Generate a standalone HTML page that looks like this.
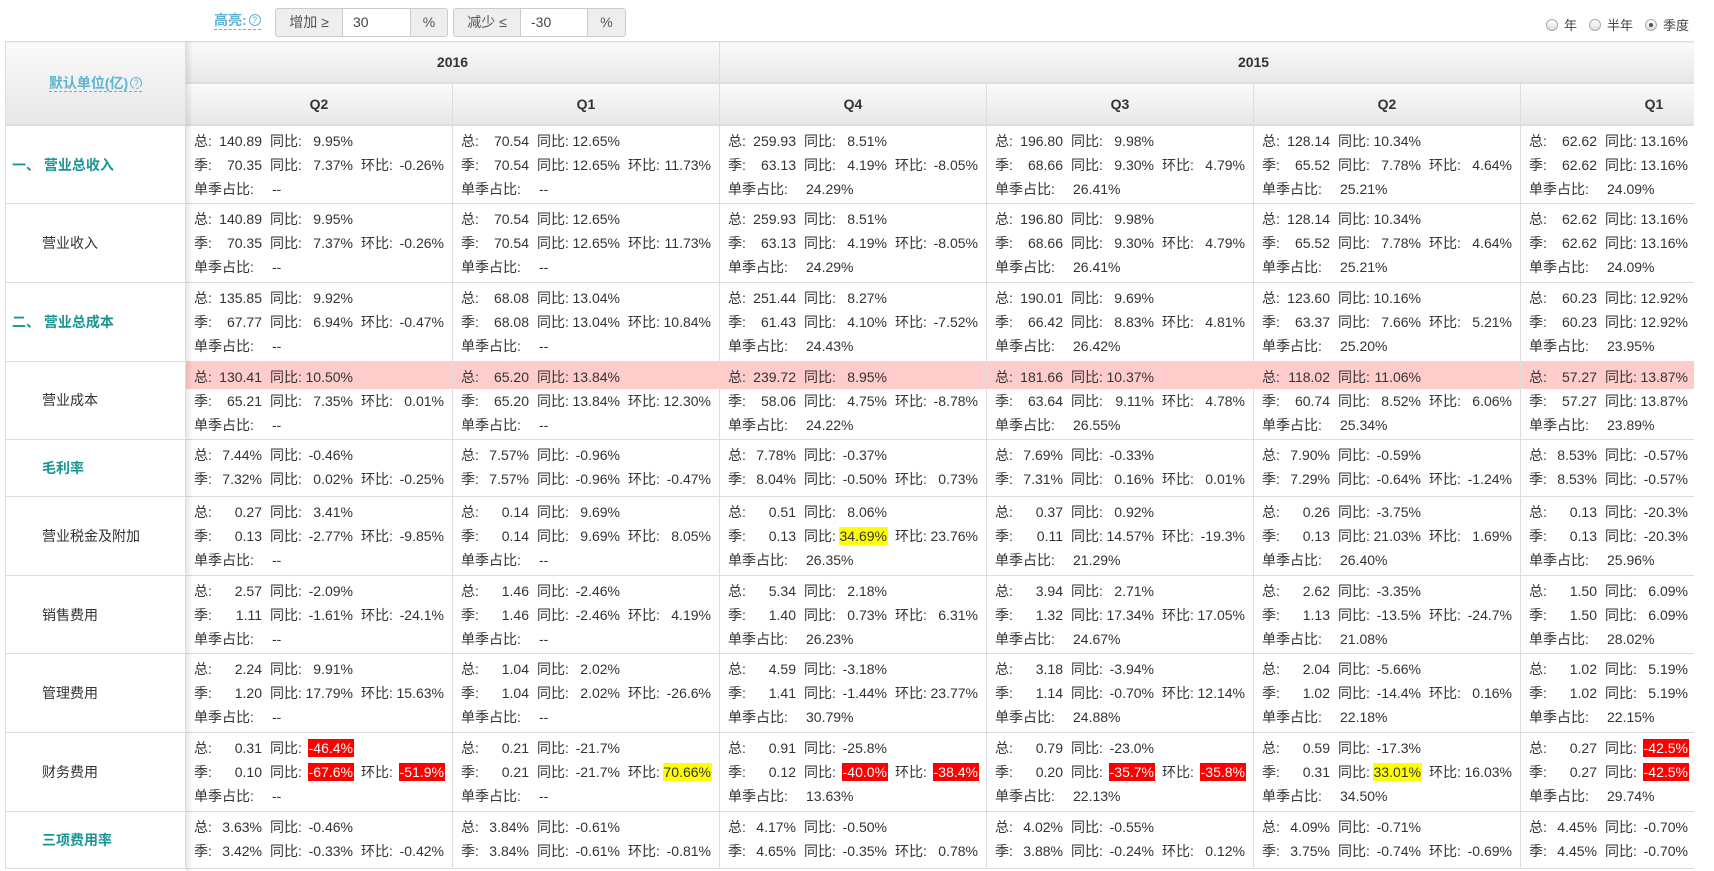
<!DOCTYPE html>
<html><head><meta charset="utf-8"><style>
*{box-sizing:content-box}
body{margin:0;width:1714px;height:867px;overflow:hidden;background:#fff;font-family:"Liberation Sans","Noto Sans CJK SC",sans-serif;font-size:14px;color:#333;position:relative}
.tb{position:absolute;top:8px;height:27px;border:1px solid #ccc;border-radius:3px;display:flex;background:#eee;font-size:14px;color:#555}
.tb span{display:block;line-height:27px;text-align:center}
.tb .in{background:#fff;border-left:1px solid #ccc;border-right:1px solid #ccc;text-align:left;padding-left:10px;box-sizing:border-box;color:#444}
.hl{position:absolute;left:214px;top:11px;color:#5bb5d5;font-weight:bold;font-size:14px;border-bottom:1px dashed #5bb5d5;line-height:18px}
.q{display:inline-block;width:10px;height:10px;border:1px solid #5bb5d5;border-radius:50%;font-size:9px;line-height:10px;text-align:center;font-weight:normal;vertical-align:2px;margin-left:2px}
.rad{position:absolute;top:15px;right:25px;font-size:13px;color:#444;display:flex;align-items:center}
.rad i{display:inline-block;width:10px;height:10px;border:1px solid #aaa;border-radius:50%;background:linear-gradient(#fff,#ddd);margin:0 6px 0 12px;position:relative;font-style:normal}
.rad i.on:after{content:"";position:absolute;left:3px;top:3px;width:4px;height:4px;border-radius:50%;background:#555}
.wrap{position:absolute;left:5px;top:41px;width:1689px;height:830px;overflow:hidden}
table{border-collapse:collapse;table-layout:fixed;width:1782px}
td,th{border:1px solid #ddd;padding:0;vertical-align:top}
th{background:linear-gradient(#fafafa,#e7e7e7);font-weight:bold;font-size:14px;height:40px;vertical-align:middle;text-align:center;color:#333;border-bottom:2px solid #ddd}
th.u{color:#5bb5d5}
th.u span{border-bottom:1px dashed #5bb5d5}
.t{border-left:1px solid #2a8f8f!important}
tr.a{height:78.7px}tr.b{height:56.8px}
td.h{vertical-align:middle;white-space:nowrap;padding-left:36px}
td.g{color:#1a9595;font-weight:bold}
td.g1{padding-left:6px}
p{margin:0;height:24px;line-height:24px;padding-left:8px;white-space:nowrap;position:relative}
td p:first-child{padding-top:3px}
tr.pk p:first-child{background:#fcc}
b,u,s{display:inline-block;position:relative;font-weight:normal;text-decoration:none;height:24px;vertical-align:top}
b{width:68px}u{width:83px;margin-left:8px}s{width:83px;margin-left:8px}
i{font-style:normal;position:absolute;right:0;top:0}
i.r,i.y{line-height:18px;top:3px;padding:0 1px;right:-1px}
i.r{background:#f00;color:#fff}i.y{background:#ff0}
em{font-style:normal;position:absolute;left:86px;top:0}
.sh{position:absolute;left:186px;top:41px;width:7px;height:830px;background:linear-gradient(90deg,rgba(0,0,0,.09),rgba(0,0,0,0))}
</style></head><body>
<div class="hl">高亮:<span class="q">?</span></div>
<div class="tb" style="left:275px;width:171px"><span style="width:66px">增加 ≥</span><span class="in" style="width:69px">30</span><span style="width:36px">%</span></div>
<div class="tb" style="left:453px;width:171px"><span style="width:66px">减少 ≤</span><span class="in" style="width:68px">-30</span><span style="width:37px">%</span></div>
<div class="rad"><i></i>年<i></i>半年<i class="on"></i>季度</div>
<div class="wrap"><table>
<colgroup><col style="width:180px"><col style="width:267px"><col style="width:267px"><col style="width:267px"><col style="width:267px"><col style="width:267px"><col style="width:267px"></colgroup>
<tr><th rowspan="2" class="u"><span>默认单位(亿)<span class="q">?</span></span></th><th colspan="2">2016</th><th colspan="4" class="t">2015</th></tr>
<tr><th>Q2</th><th>Q1</th><th class="t">Q4</th><th>Q3</th><th>Q2</th><th>Q1</th></tr>

<tr class="a"><td class="h g g1">一、 营业总收入</td>
<td><p><b>总:<i>140.89</i></b><u>同比:<i>9.95%</i></u></p><p><b>季:<i>70.35</i></b><u>同比:<i>7.37%</i></u><s>环比:<i>-0.26%</i></s></p><p>单季占比:<em>--</em></p></td>
<td><p><b>总:<i>70.54</i></b><u>同比:<i>12.65%</i></u></p><p><b>季:<i>70.54</i></b><u>同比:<i>12.65%</i></u><s>环比:<i>11.73%</i></s></p><p>单季占比:<em>--</em></p></td>
<td class="t"><p><b>总:<i>259.93</i></b><u>同比:<i>8.51%</i></u></p><p><b>季:<i>63.13</i></b><u>同比:<i>4.19%</i></u><s>环比:<i>-8.05%</i></s></p><p>单季占比:<em>24.29%</em></p></td>
<td><p><b>总:<i>196.80</i></b><u>同比:<i>9.98%</i></u></p><p><b>季:<i>68.66</i></b><u>同比:<i>9.30%</i></u><s>环比:<i>4.79%</i></s></p><p>单季占比:<em>26.41%</em></p></td>
<td><p><b>总:<i>128.14</i></b><u>同比:<i>10.34%</i></u></p><p><b>季:<i>65.52</i></b><u>同比:<i>7.78%</i></u><s>环比:<i>4.64%</i></s></p><p>单季占比:<em>25.21%</em></p></td>
<td><p><b>总:<i>62.62</i></b><u>同比:<i>13.16%</i></u></p><p><b>季:<i>62.62</i></b><u>同比:<i>13.16%</i></u></p><p>单季占比:<em>24.09%</em></p></td></tr>

<tr class="a"><td class="h">营业收入</td>
<td><p><b>总:<i>140.89</i></b><u>同比:<i>9.95%</i></u></p><p><b>季:<i>70.35</i></b><u>同比:<i>7.37%</i></u><s>环比:<i>-0.26%</i></s></p><p>单季占比:<em>--</em></p></td>
<td><p><b>总:<i>70.54</i></b><u>同比:<i>12.65%</i></u></p><p><b>季:<i>70.54</i></b><u>同比:<i>12.65%</i></u><s>环比:<i>11.73%</i></s></p><p>单季占比:<em>--</em></p></td>
<td class="t"><p><b>总:<i>259.93</i></b><u>同比:<i>8.51%</i></u></p><p><b>季:<i>63.13</i></b><u>同比:<i>4.19%</i></u><s>环比:<i>-8.05%</i></s></p><p>单季占比:<em>24.29%</em></p></td>
<td><p><b>总:<i>196.80</i></b><u>同比:<i>9.98%</i></u></p><p><b>季:<i>68.66</i></b><u>同比:<i>9.30%</i></u><s>环比:<i>4.79%</i></s></p><p>单季占比:<em>26.41%</em></p></td>
<td><p><b>总:<i>128.14</i></b><u>同比:<i>10.34%</i></u></p><p><b>季:<i>65.52</i></b><u>同比:<i>7.78%</i></u><s>环比:<i>4.64%</i></s></p><p>单季占比:<em>25.21%</em></p></td>
<td><p><b>总:<i>62.62</i></b><u>同比:<i>13.16%</i></u></p><p><b>季:<i>62.62</i></b><u>同比:<i>13.16%</i></u></p><p>单季占比:<em>24.09%</em></p></td></tr>

<tr class="a"><td class="h g g1">二、 营业总成本</td>
<td><p><b>总:<i>135.85</i></b><u>同比:<i>9.92%</i></u></p><p><b>季:<i>67.77</i></b><u>同比:<i>6.94%</i></u><s>环比:<i>-0.47%</i></s></p><p>单季占比:<em>--</em></p></td>
<td><p><b>总:<i>68.08</i></b><u>同比:<i>13.04%</i></u></p><p><b>季:<i>68.08</i></b><u>同比:<i>13.04%</i></u><s>环比:<i>10.84%</i></s></p><p>单季占比:<em>--</em></p></td>
<td class="t"><p><b>总:<i>251.44</i></b><u>同比:<i>8.27%</i></u></p><p><b>季:<i>61.43</i></b><u>同比:<i>4.10%</i></u><s>环比:<i>-7.52%</i></s></p><p>单季占比:<em>24.43%</em></p></td>
<td><p><b>总:<i>190.01</i></b><u>同比:<i>9.69%</i></u></p><p><b>季:<i>66.42</i></b><u>同比:<i>8.83%</i></u><s>环比:<i>4.81%</i></s></p><p>单季占比:<em>26.42%</em></p></td>
<td><p><b>总:<i>123.60</i></b><u>同比:<i>10.16%</i></u></p><p><b>季:<i>63.37</i></b><u>同比:<i>7.66%</i></u><s>环比:<i>5.21%</i></s></p><p>单季占比:<em>25.20%</em></p></td>
<td><p><b>总:<i>60.23</i></b><u>同比:<i>12.92%</i></u></p><p><b>季:<i>60.23</i></b><u>同比:<i>12.92%</i></u></p><p>单季占比:<em>23.95%</em></p></td></tr>

<tr class="a pk"><td class="h">营业成本</td>
<td><p><b>总:<i>130.41</i></b><u>同比:<i>10.50%</i></u></p><p><b>季:<i>65.21</i></b><u>同比:<i>7.35%</i></u><s>环比:<i>0.01%</i></s></p><p>单季占比:<em>--</em></p></td>
<td><p><b>总:<i>65.20</i></b><u>同比:<i>13.84%</i></u></p><p><b>季:<i>65.20</i></b><u>同比:<i>13.84%</i></u><s>环比:<i>12.30%</i></s></p><p>单季占比:<em>--</em></p></td>
<td class="t"><p><b>总:<i>239.72</i></b><u>同比:<i>8.95%</i></u></p><p><b>季:<i>58.06</i></b><u>同比:<i>4.75%</i></u><s>环比:<i>-8.78%</i></s></p><p>单季占比:<em>24.22%</em></p></td>
<td><p><b>总:<i>181.66</i></b><u>同比:<i>10.37%</i></u></p><p><b>季:<i>63.64</i></b><u>同比:<i>9.11%</i></u><s>环比:<i>4.78%</i></s></p><p>单季占比:<em>26.55%</em></p></td>
<td><p><b>总:<i>118.02</i></b><u>同比:<i>11.06%</i></u></p><p><b>季:<i>60.74</i></b><u>同比:<i>8.52%</i></u><s>环比:<i>6.06%</i></s></p><p>单季占比:<em>25.34%</em></p></td>
<td><p><b>总:<i>57.27</i></b><u>同比:<i>13.87%</i></u></p><p><b>季:<i>57.27</i></b><u>同比:<i>13.87%</i></u></p><p>单季占比:<em>23.89%</em></p></td></tr>

<tr class="b"><td class="h g">毛利率</td>
<td><p><b>总:<i>7.44%</i></b><u>同比:<i>-0.46%</i></u></p><p><b>季:<i>7.32%</i></b><u>同比:<i>0.02%</i></u><s>环比:<i>-0.25%</i></s></p></td>
<td><p><b>总:<i>7.57%</i></b><u>同比:<i>-0.96%</i></u></p><p><b>季:<i>7.57%</i></b><u>同比:<i>-0.96%</i></u><s>环比:<i>-0.47%</i></s></p></td>
<td class="t"><p><b>总:<i>7.78%</i></b><u>同比:<i>-0.37%</i></u></p><p><b>季:<i>8.04%</i></b><u>同比:<i>-0.50%</i></u><s>环比:<i>0.73%</i></s></p></td>
<td><p><b>总:<i>7.69%</i></b><u>同比:<i>-0.33%</i></u></p><p><b>季:<i>7.31%</i></b><u>同比:<i>0.16%</i></u><s>环比:<i>0.01%</i></s></p></td>
<td><p><b>总:<i>7.90%</i></b><u>同比:<i>-0.59%</i></u></p><p><b>季:<i>7.29%</i></b><u>同比:<i>-0.64%</i></u><s>环比:<i>-1.24%</i></s></p></td>
<td><p><b>总:<i>8.53%</i></b><u>同比:<i>-0.57%</i></u></p><p><b>季:<i>8.53%</i></b><u>同比:<i>-0.57%</i></u></p></td></tr>

<tr class="a"><td class="h">营业税金及附加</td>
<td><p><b>总:<i>0.27</i></b><u>同比:<i>3.41%</i></u></p><p><b>季:<i>0.13</i></b><u>同比:<i>-2.77%</i></u><s>环比:<i>-9.85%</i></s></p><p>单季占比:<em>--</em></p></td>
<td><p><b>总:<i>0.14</i></b><u>同比:<i>9.69%</i></u></p><p><b>季:<i>0.14</i></b><u>同比:<i>9.69%</i></u><s>环比:<i>8.05%</i></s></p><p>单季占比:<em>--</em></p></td>
<td class="t"><p><b>总:<i>0.51</i></b><u>同比:<i>8.06%</i></u></p><p><b>季:<i>0.13</i></b><u>同比:<i class="y">34.69%</i></u><s>环比:<i>23.76%</i></s></p><p>单季占比:<em>26.35%</em></p></td>
<td><p><b>总:<i>0.37</i></b><u>同比:<i>0.92%</i></u></p><p><b>季:<i>0.11</i></b><u>同比:<i>14.57%</i></u><s>环比:<i>-19.3%</i></s></p><p>单季占比:<em>21.29%</em></p></td>
<td><p><b>总:<i>0.26</i></b><u>同比:<i>-3.75%</i></u></p><p><b>季:<i>0.13</i></b><u>同比:<i>21.03%</i></u><s>环比:<i>1.69%</i></s></p><p>单季占比:<em>26.40%</em></p></td>
<td><p><b>总:<i>0.13</i></b><u>同比:<i>-20.3%</i></u></p><p><b>季:<i>0.13</i></b><u>同比:<i>-20.3%</i></u></p><p>单季占比:<em>25.96%</em></p></td></tr>

<tr class="a"><td class="h">销售费用</td>
<td><p><b>总:<i>2.57</i></b><u>同比:<i>-2.09%</i></u></p><p><b>季:<i>1.11</i></b><u>同比:<i>-1.61%</i></u><s>环比:<i>-24.1%</i></s></p><p>单季占比:<em>--</em></p></td>
<td><p><b>总:<i>1.46</i></b><u>同比:<i>-2.46%</i></u></p><p><b>季:<i>1.46</i></b><u>同比:<i>-2.46%</i></u><s>环比:<i>4.19%</i></s></p><p>单季占比:<em>--</em></p></td>
<td class="t"><p><b>总:<i>5.34</i></b><u>同比:<i>2.18%</i></u></p><p><b>季:<i>1.40</i></b><u>同比:<i>0.73%</i></u><s>环比:<i>6.31%</i></s></p><p>单季占比:<em>26.23%</em></p></td>
<td><p><b>总:<i>3.94</i></b><u>同比:<i>2.71%</i></u></p><p><b>季:<i>1.32</i></b><u>同比:<i>17.34%</i></u><s>环比:<i>17.05%</i></s></p><p>单季占比:<em>24.67%</em></p></td>
<td><p><b>总:<i>2.62</i></b><u>同比:<i>-3.35%</i></u></p><p><b>季:<i>1.13</i></b><u>同比:<i>-13.5%</i></u><s>环比:<i>-24.7%</i></s></p><p>单季占比:<em>21.08%</em></p></td>
<td><p><b>总:<i>1.50</i></b><u>同比:<i>6.09%</i></u></p><p><b>季:<i>1.50</i></b><u>同比:<i>6.09%</i></u></p><p>单季占比:<em>28.02%</em></p></td></tr>

<tr class="a"><td class="h">管理费用</td>
<td><p><b>总:<i>2.24</i></b><u>同比:<i>9.91%</i></u></p><p><b>季:<i>1.20</i></b><u>同比:<i>17.79%</i></u><s>环比:<i>15.63%</i></s></p><p>单季占比:<em>--</em></p></td>
<td><p><b>总:<i>1.04</i></b><u>同比:<i>2.02%</i></u></p><p><b>季:<i>1.04</i></b><u>同比:<i>2.02%</i></u><s>环比:<i>-26.6%</i></s></p><p>单季占比:<em>--</em></p></td>
<td class="t"><p><b>总:<i>4.59</i></b><u>同比:<i>-3.18%</i></u></p><p><b>季:<i>1.41</i></b><u>同比:<i>-1.44%</i></u><s>环比:<i>23.77%</i></s></p><p>单季占比:<em>30.79%</em></p></td>
<td><p><b>总:<i>3.18</i></b><u>同比:<i>-3.94%</i></u></p><p><b>季:<i>1.14</i></b><u>同比:<i>-0.70%</i></u><s>环比:<i>12.14%</i></s></p><p>单季占比:<em>24.88%</em></p></td>
<td><p><b>总:<i>2.04</i></b><u>同比:<i>-5.66%</i></u></p><p><b>季:<i>1.02</i></b><u>同比:<i>-14.4%</i></u><s>环比:<i>0.16%</i></s></p><p>单季占比:<em>22.18%</em></p></td>
<td><p><b>总:<i>1.02</i></b><u>同比:<i>5.19%</i></u></p><p><b>季:<i>1.02</i></b><u>同比:<i>5.19%</i></u></p><p>单季占比:<em>22.15%</em></p></td></tr>

<tr class="a"><td class="h">财务费用</td>
<td><p><b>总:<i>0.31</i></b><u>同比:<i class="r">-46.4%</i></u></p><p><b>季:<i>0.10</i></b><u>同比:<i class="r">-67.6%</i></u><s>环比:<i class="r">-51.9%</i></s></p><p>单季占比:<em>--</em></p></td>
<td><p><b>总:<i>0.21</i></b><u>同比:<i>-21.7%</i></u></p><p><b>季:<i>0.21</i></b><u>同比:<i>-21.7%</i></u><s>环比:<i class="y">70.66%</i></s></p><p>单季占比:<em>--</em></p></td>
<td class="t"><p><b>总:<i>0.91</i></b><u>同比:<i>-25.8%</i></u></p><p><b>季:<i>0.12</i></b><u>同比:<i class="r">-40.0%</i></u><s>环比:<i class="r">-38.4%</i></s></p><p>单季占比:<em>13.63%</em></p></td>
<td><p><b>总:<i>0.79</i></b><u>同比:<i>-23.0%</i></u></p><p><b>季:<i>0.20</i></b><u>同比:<i class="r">-35.7%</i></u><s>环比:<i class="r">-35.8%</i></s></p><p>单季占比:<em>22.13%</em></p></td>
<td><p><b>总:<i>0.59</i></b><u>同比:<i>-17.3%</i></u></p><p><b>季:<i>0.31</i></b><u>同比:<i class="y">33.01%</i></u><s>环比:<i>16.03%</i></s></p><p>单季占比:<em>34.50%</em></p></td>
<td><p><b>总:<i>0.27</i></b><u>同比:<i class="r">-42.5%</i></u></p><p><b>季:<i>0.27</i></b><u>同比:<i class="r">-42.5%</i></u></p><p>单季占比:<em>29.74%</em></p></td></tr>

<tr class="b"><td class="h g">三项费用率</td>
<td><p><b>总:<i>3.63%</i></b><u>同比:<i>-0.46%</i></u></p><p><b>季:<i>3.42%</i></b><u>同比:<i>-0.33%</i></u><s>环比:<i>-0.42%</i></s></p></td>
<td><p><b>总:<i>3.84%</i></b><u>同比:<i>-0.61%</i></u></p><p><b>季:<i>3.84%</i></b><u>同比:<i>-0.61%</i></u><s>环比:<i>-0.81%</i></s></p></td>
<td class="t"><p><b>总:<i>4.17%</i></b><u>同比:<i>-0.50%</i></u></p><p><b>季:<i>4.65%</i></b><u>同比:<i>-0.35%</i></u><s>环比:<i>0.78%</i></s></p></td>
<td><p><b>总:<i>4.02%</i></b><u>同比:<i>-0.55%</i></u></p><p><b>季:<i>3.88%</i></b><u>同比:<i>-0.24%</i></u><s>环比:<i>0.12%</i></s></p></td>
<td><p><b>总:<i>4.09%</i></b><u>同比:<i>-0.71%</i></u></p><p><b>季:<i>3.75%</i></b><u>同比:<i>-0.74%</i></u><s>环比:<i>-0.69%</i></s></p></td>
<td><p><b>总:<i>4.45%</i></b><u>同比:<i>-0.70%</i></u></p><p><b>季:<i>4.45%</i></b><u>同比:<i>-0.70%</i></u></p></td></tr>
</table></div>
<div class="sh"></div>
</body></html>
